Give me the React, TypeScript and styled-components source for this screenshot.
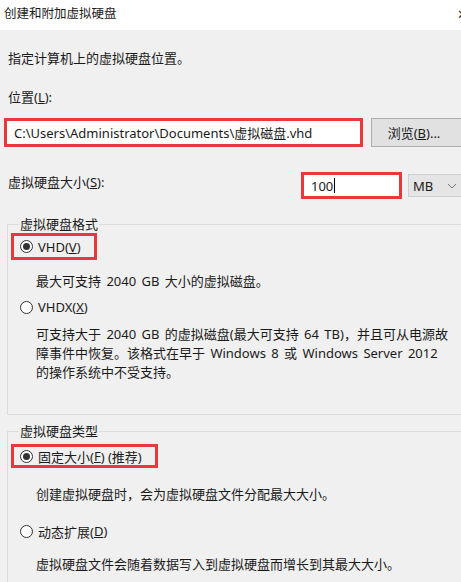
import React from "react";
import styled, { createGlobalStyle } from "styled-components";

const GlobalStyle = createGlobalStyle`
    html, body {
        margin: 0;
        padding: 0;
        overflow: hidden;
        background: #f0f0f0;
    }
    * {
        box-sizing: border-box;
    }
`;

const FONT = `"Noto Sans", "Noto Sans CJK SC", sans-serif`;
const RED = "#e8383d";

const SWindow = styled.div`
    width: 475px;
    height: 582px;
    font-family: ${FONT};
    font-size: 13px;
    color: #1a1a1a;
    background: #f0f0f0;
    overflow: hidden;
`;

const STitleBar = styled.div`
    height: 30px;
    background: #ffffff;
    display: flex;
    justify-content: space-between;
    align-items: flex-start;
    padding: 4px 7px 0 4px;
    line-height: 20px;
    font-size: 12.5px;
`;

const SClose = styled.span`
    font-size: 13px;
    color: #333;
`;

const SBody = styled.div`
    display: flex;
    flex-direction: column;
    padding: 0 0 0 7px;
`;

const SText = styled.div<{ mt: number; indent?: number }>`
    margin-top: ${({ mt }) => mt}px;
    padding-left: ${({ indent }) => indent || 1}px;
    line-height: 20px;
    white-space: nowrap;
    word-spacing: 2px;
`;

const SParagraph = styled.div`
    margin-top: 8px;
    padding-left: 25px;
    line-height: 19px;
    white-space: nowrap;
    word-spacing: 2px;
`;

const SRow = styled.div<{ mt: number }>`
    display: flex;
    align-items: center;
    margin-top: ${({ mt }) => mt}px;
`;

const SHighlight = styled.div<{ width: number; height: number }>`
    width: ${({ width }) => width}px;
    height: ${({ height }) => height}px;
    border: 3px solid ${RED};
    display: flex;
    align-items: center;
    flex-shrink: 0;
`;

const SInput = styled.div`
    flex: 1;
    align-self: stretch;
    background: #ffffff;
    display: flex;
    align-items: center;
    padding-left: 7px;
    white-space: nowrap;
`;

const SCaret = styled.span`
    display: inline-block;
    width: 1px;
    height: 15px;
    background: #000;
    margin-left: 1px;
`;

const SButton = styled.div`
    margin-left: 8px;
    width: 92px;
    height: 29px;
    background: #e1e1e1;
    border: 1px solid #adadad;
    display: flex;
    align-items: center;
    justify-content: center;
    padding-right: 6px;
    flex-shrink: 0;
`;

const SSizeLabel = styled.div`
    width: 294px;
    padding-left: 1px;
    padding-bottom: 8px;
`;

const SSelect = styled.div`
    margin-left: 6px;
    width: 62px;
    height: 23px;
    background: #e5e5e5;
    border: 1px solid #cfcfcf;
    display: flex;
    align-items: center;
    justify-content: space-between;
    padding: 0 12px 0 4px;
    flex-shrink: 0;
`;

const SGroup = styled.fieldset<{ mt: number; pb: number }>`
    margin: ${({ mt }) => mt}px 0 0 0;
    padding: 0 0 ${({ pb }) => pb}px 3px;
    border: 1px solid #dcdcdc;
    width: 470px;
    min-width: 0;
`;

const SLegend = styled.legend`
    padding: 0 1px;
    margin-left: 8px;
    line-height: 20px;
`;

const SRadioRow = styled.div<{ mt: number; boxed?: boolean; width?: number; height?: number }>`
    display: flex;
    align-items: center;
    margin-top: ${({ mt }) => mt}px;
    width: ${({ boxed, width }) => (boxed ? `${width}px` : "auto")};
    height: ${({ height }) => height || 20}px;
    border: ${({ boxed }) => (boxed ? `3px solid ${RED}` : "none")};
    padding-left: ${({ boxed }) => (boxed ? 6 : 9)}px;
    white-space: nowrap;
`;

const SRadio = styled.span<{ checked?: boolean }>`
    width: 13px;
    height: 13px;
    border-radius: 50%;
    border: 1px solid #333;
    background: #fff;
    display: inline-flex;
    align-items: center;
    justify-content: center;
    margin-right: 5px;
    flex-shrink: 0;

    &::after {
        content: "";
        width: 7px;
        height: 7px;
        border-radius: 50%;
        background: ${({ checked }) => (checked ? "#333" : "transparent")};
    }
`;

const SKey = styled.span`
    text-decoration: underline;
`;

function Chevron() {
    return (
        <svg width="10" height="6" viewBox="0 0 10 6">
            <path d="M1 1 L5 5 L9 1" fill="none" stroke="#777" strokeWidth="1" />
        </svg>
    );
}

export default function App() {
    return (
        <SWindow>
            <GlobalStyle />
            <STitleBar>
                <span>创建和附加虚拟硬盘</span>
                <SClose>✕</SClose>
            </STitleBar>
            <SBody>
                <SText mt={18}>指定计算机上的虚拟硬盘位置。</SText>
                <SText mt={19}>
                    位置(<SKey>L</SKey>):
                </SText>
                <SRow mt={11}>
                    <SHighlight width={359} height={29} style={{ marginLeft: -3 }}>
                        <SInput>C:\Users\Administrator\Documents\虚拟磁盘.vhd</SInput>
                    </SHighlight>
                    <SButton>
                        浏览(<SKey>B</SKey>)...
                    </SButton>
                </SRow>
                <SRow mt={25}>
                    <SSizeLabel>
                        虚拟硬盘大小(<SKey>S</SKey>):
                    </SSizeLabel>
                    <SHighlight width={101} height={27}>
                        <SInput>
                            100<SCaret />
                        </SInput>
                    </SHighlight>
                    <SSelect>
                        <span>MB</span>
                        <Chevron />
                    </SSelect>
                </SRow>

                <SGroup mt={15} pb={32}>
                    <SLegend>虚拟硬盘格式</SLegend>
                    <SRadioRow mt={-1} boxed width={86} height={27}>
                        <SRadio checked />
                        VHD(<SKey>V</SKey>)
                    </SRadioRow>
                    <SText mt={11} indent={25}>
                        最大可支持 2040 GB 大小的虚拟磁盘。
                    </SText>
                    <SRadioRow mt={6}>
                        <SRadio />
                        VHDX(<SKey>X</SKey>)
                    </SRadioRow>
                    <SParagraph>
                        可支持大于 2040 GB 的虚拟磁盘(最大可支持 64 TB)，并且可从电源故
                        <br />
                        障事件中恢复。该格式在早于 Windows 8 或 Windows Server 2012
                        <br />
                        的操作系统中不受支持。
                    </SParagraph>
                </SGroup>

                <SGroup mt={6} pb={40}>
                    <SLegend>虚拟硬盘类型</SLegend>
                    <SRadioRow mt={3} boxed width={147} height={24}>
                        <SRadio checked />
                        固定大小(<SKey>F</SKey>) (推荐)
                    </SRadioRow>
                    <SText mt={16} indent={25}>
                        创建虚拟硬盘时，会为虚拟硬盘文件分配最大大小。
                    </SText>
                    <SRadioRow mt={17}>
                        <SRadio />
                        动态扩展(<SKey>D</SKey>)
                    </SRadioRow>
                    <SText mt={13} indent={25}>
                        虚拟硬盘文件会随着数据写入到虚拟硬盘而增长到其最大大小。
                    </SText>
                </SGroup>
            </SBody>
        </SWindow>
    );
}
